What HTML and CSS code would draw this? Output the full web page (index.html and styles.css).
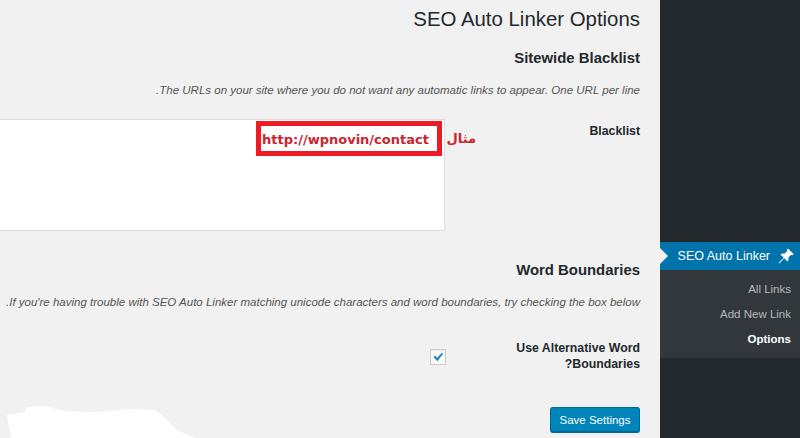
FILE: index.html
```html
<!DOCTYPE html>
<html dir="rtl">
<head>
    <meta charset="utf-8">
    <title>SEO Auto Linker Options</title>
    <link rel="stylesheet" href="styles.css">
</head>
<body>
    <div class="wrap">
        <div class="content">
            <h1 class="page-title">SEO Auto Linker Options</h1>

            <h2 class="section-title section-first">Sitewide Blacklist</h2>
            <p class="description">The URLs on your site where you do not want any automatic links to appear. One URL per line.</p>
            <div class="row row-blacklist">
                <label class="row-label" for="blacklist">Blacklist</label>
                <div class="field">
                    <div class="textarea" id="blacklist"></div>
                    <div class="callout" dir="ltr">http://wpnovin/contact</div>
                    <span class="callout-note">مثال</span>
                </div>
            </div>

            <h2 class="section-title section-second">Word Boundaries</h2>
            <p class="description">If you're having trouble with SEO Auto Linker matching unicode characters and word boundaries, try checking the box below.</p>
            <div class="row row-boundaries">
                <label class="row-label" for="boundaries">Use Alternative Word Boundaries?</label>
                <div class="field">
                    <span class="checkbox" id="boundaries">
                        <svg viewBox="0 0 16 16" width="14" height="14"><path d="M2.8 8l1.900-1.700 2.300 2.600L12.400 3l1.600 1.200-6.700 8.600z" fill="#1e8cbe"/></svg>
                    </span>
                </div>
            </div>

            <div class="actions">
                <button type="button" class="button">Save Settings</button>
            </div>
        </div>
        <svg class="scribble" viewBox="0 0 190 32" width="190" height="32"><path d="M2 9L20 6 22 1 40 0 58 5 90 6 124 3 150 4 160 12 172 24 190 32H6z" fill="#ffffff"/></svg>
    </div>
    <div class="sidebar">
        <div class="menu-current">
            <span class="menu-arrow"></span>
            <svg class="menu-pin" viewBox="0 0 20 20" width="18" height="18"><path d="M12.2 1.6l6.2 6.2-1.3 1.3-1.2-.6-3.3 3.3c.5 1.6.2 3.2-.9 4.4L8 12.500l-5.400 5.700-.8-.8L7.500 12 3.800 8.300c1.200-1.100 2.800-1.400 4.400-.9l3.300-3.300-.6-1.200z" fill="#ffffff"/></svg>
            <span class="menu-name" dir="ltr">SEO Auto Linker</span>
        </div>
        <ul class="submenu">
            <li>All Links</li>
            <li>Add New Link</li>
            <li class="current">Options</li>
        </ul>
    </div>
</body>
</html>
```

FILE: styles.css
```css
/* General Styles */
html, body {
    margin: 0;
    padding: 0;
    height: 438px;
    overflow: hidden;
}
body {
    display: flex;
    background-color: #f1f1f1;
    font-family: "Liberation Sans", Arial, sans-serif;
    font-size: 11.5px;
    color: #23282d;
}
/* Sidebar comes second in the markup but sits on the right */
.wrap {
    order: 2;
    position: relative;
    width: 660px;
    height: 438px;
    overflow: hidden;
}
.sidebar {
    order: 1;
    width: 140px;
    height: 438px;
    padding-top: 242px;
    box-sizing: border-box;
    background-color: #23282d;
}
.content {
    padding: 0 20px;
}
/* Headings */
.page-title {
    margin: 0;
    padding-top: 5px;
    font-size: 20.4px;
    line-height: 29px;
    font-weight: 400;
}
.section-title {
    margin: 0;
    font-size: 14.9px;
    line-height: 20px;
    font-weight: 700;
}
.section-first {
    margin-top: 14px;
}
.section-second {
    margin-top: 29px;
}
.description {
    margin: 14px 0 0;
    font-style: italic;
    font-size: 11.5px;
    line-height: 17px;
    color: #555555;
    white-space: nowrap;
}
/* Form rows */
.row {
    display: flex;
}
.row-blacklist {
    margin-top: 20px;
}
.row-boundaries {
    margin-top: 29px;
}
.row-label {
    width: 195px;
    flex-shrink: 0;
    font-size: 12.3px;
    line-height: 16px;
    font-weight: 700;
}
.row-blacklist .row-label {
    padding-top: 4px;
}
.field {
    position: relative;
}
.textarea {
    width: 500px;
    height: 110px;
    background-color: #ffffff;
    border: 1px solid #dddddd;
}
/* Annotation drawn over the textarea */
.callout {
    position: absolute;
    top: 2px;
    right: 3px;
    width: 186px;
    height: 35px;
    box-sizing: border-box;
    border: 5px solid #ed1c24;
    background-color: #ffffff;
    padding-left: 1px;
    font-family: "DejaVu Sans", sans-serif;
    font-size: 13px;
    line-height: 27px;
    font-weight: 700;
    color: #c9252f;
    white-space: nowrap;
}
.callout-note {
    position: absolute;
    top: 10px;
    right: -31px;
    font-family: "DejaVu Sans", sans-serif;
    font-size: 13px;
    line-height: 20px;
    font-weight: 700;
    color: #c9252f;
}
.row-boundaries .field {
    padding-top: 9px;
}
.checkbox {
    display: flex;
    align-items: center;
    justify-content: center;
    width: 16px;
    height: 16px;
    margin-right: -1px;
    box-sizing: border-box;
    background-color: #ffffff;
    border: 1px solid #c8ccd0;
    box-shadow: inset 0 1px 2px rgba(0, 0, 0, 0.1);
}
/* Button Styles */
.actions {
    margin-top: 35px;
    display: flex;
}
.button {
    width: 90px;
    height: 26px;
    padding: 0;
    font-family: inherit;
    font-size: 11.5px;
    color: #ffffff;
    background-color: #0085ba;
    border: 1px solid #006799;
    border-bottom-width: 2px;
    border-radius: 3px;
}
.scribble {
    position: absolute;
    left: 5px;
    bottom: 0;
}
/* Admin menu */
.menu-current {
    display: flex;
    align-items: center;
    position: relative;
    height: 28px;
    padding-right: 5px;
    background-color: #0073aa;
    color: #ffffff;
}
.menu-arrow {
    position: absolute;
    left: 0;
    top: 6px;
    border-style: solid;
    border-width: 8px 0 8px 8px;
    border-color: transparent transparent transparent #f1f1f1;
}
.menu-pin {
    flex-shrink: 0;
}
.menu-name {
    margin-right: 7px;
    font-size: 12.5px;
}
.submenu {
    margin: 0;
    padding: 7px 9px 6px 0;
    list-style: none;
    background-color: #32373c;
    color: #b4b9be;
    font-size: 11.5px;
}
.submenu li {
    height: 25px;
    line-height: 24px;
}
.submenu .current {
    color: #ffffff;
    font-weight: 700;
}
```
